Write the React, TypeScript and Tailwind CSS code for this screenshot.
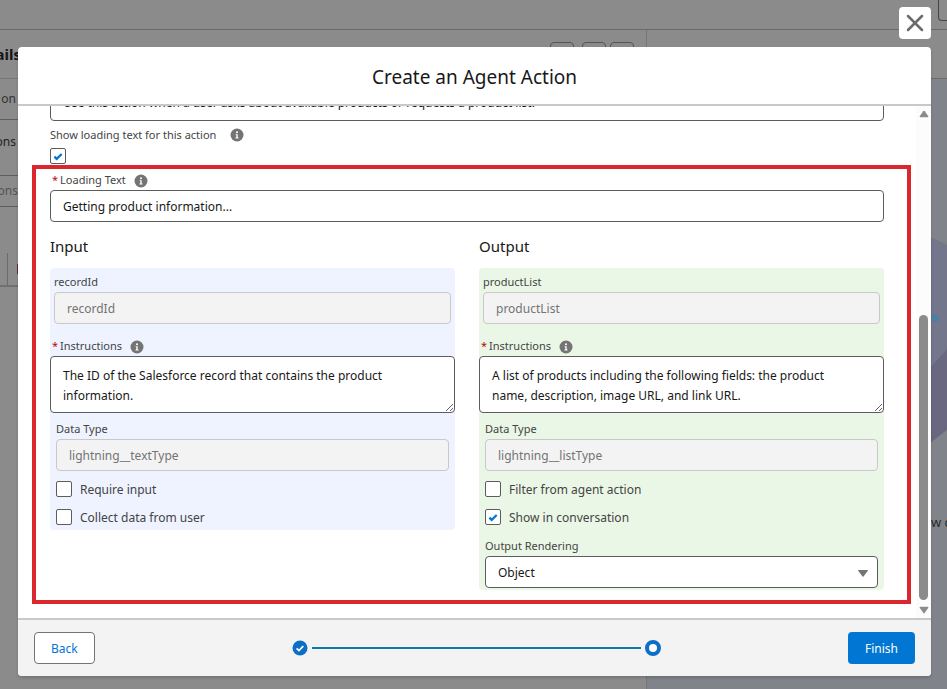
import React from 'react'
import { X } from 'lucide-react'
import { clsx } from 'clsx'

interface TextFieldProps {
  id: string
  label: string
  value: string
  className?: string
}

const labelText = 'text-[11px] leading-4 text-[#444444]'
const disabledInput =
  'block h-8 w-full rounded border border-[#c9c9c9] bg-[#f3f3f3] px-3 text-xs text-[#747474]'

const InfoIcon = ({ about }: { about: string }) => (
  <button type="button" aria-label={`Help: ${about}`} className="size-3.5">
    <svg viewBox="0 0 14 14" className="size-3.5">
      <circle cx="7" cy="7" r="6.5" fill="#747474" />
      <circle cx="7" cy="4.3" r="1" fill="#fff" />
      <path d="M5.6 6.2h2.1v3.3h.8v.9H5.5v-.9h.8V7.1h-.7z" fill="#fff" />
    </svg>
  </button>
)

const Required = () => <span className="mr-0.5 text-[#ba0517]">*</span>

const DisabledField = ({ id, label, value, className }: TextFieldProps) => (
  <div className={className}>
    <label htmlFor={id} className={clsx(labelText, 'block pb-0.5')}>{label}</label>
    <input id={id} value={value} disabled readOnly className={disabledInput} />
  </div>
)

const InstructionsField = ({ id, value }: { id: string; value: string }) => (
  <div>
    <div className="flex h-8 items-end gap-2 px-0.5 pb-0.5">
      <label htmlFor={id} className={labelText}><Required />Instructions</label>
      <InfoIcon about="Instructions" />
    </div>
    <textarea
      id={id}
      defaultValue={value}
      className="block h-[57px] w-full resize overflow-hidden rounded border border-[#5c5c5c] bg-white pt-[9px] pr-8 pl-3 text-xs leading-5 text-[#181818]"
    />
  </div>
)

interface CheckProps {
  id: string
  label: string
  checked?: boolean
  hideLabel?: boolean
}

const Check = ({ id, label, checked = false, hideLabel = false }: CheckProps) => (
  <div className="flex h-4 items-center gap-2">
    <span className="relative size-4">
      <input
        id={id}
        type="checkbox"
        defaultChecked={checked}
        aria-label={hideLabel ? label : undefined}
        className="peer block size-4 appearance-none rounded-xs border border-[#5c5c5c] bg-white"
      />
      <svg
        viewBox="0 0 16 16"
        className="pointer-events-none absolute inset-0 hidden size-4 peer-checked:block"
      >
        <path d="M4.4 8.6l2.3 2.3 5-4.9" fill="none" stroke="#0176d3" strokeWidth="2.2" />
      </svg>
    </span>
    {!hideLabel && <label htmlFor={id} className="pt-0.5 text-xs text-[#444444]">{label}</label>}
  </div>
)

// Page that sits dimmed under the modal
const Backdrop = () => (
  <div aria-hidden="true" className="flex h-screen flex-col overflow-hidden bg-[#8b8b8b]">
    <div className="flex h-[30px] shrink-0 justify-end border-b border-[#696969]">
      <div className="h-[21px] w-[9px] rounded-bl border-b border-l border-[#444444]" />
    </div>
    <div className="flex min-h-0 flex-1">
      <div className="w-[647px] shrink-0 border-r border-[#777777]">
        <div className="flex h-[49px] items-start justify-between border-b border-[#777777] pr-3">
          <div className="flex w-[21px] justify-end overflow-hidden pt-3.5 text-[15px] leading-5 font-bold text-[#161616]">
            Details
          </div>
          <div className="flex gap-1 pt-3">
            <div className="mr-1 size-6 rounded border border-[#555555]" />
            <div className="size-6 rounded border border-[#555555]" />
            <div className="size-6 rounded border border-[#555555]" />
          </div>
        </div>
        <div className="flex h-10 w-4 items-center justify-end overflow-hidden text-xs text-[#333333]">on</div>
        <div className="flex h-[57px] border-y border-[#5e5e5e]">
          <div className="flex h-11 w-4 items-center justify-end overflow-hidden text-xs text-[#222222]">Actions</div>
        </div>
        <div className="flex h-[31px] border-b border-[#5e5e5e]">
          <div className="flex w-[18px] items-center justify-end overflow-hidden text-xs text-[#555555]">Actions</div>
        </div>
        <div className="mt-[46px] flex h-[34px] items-center border-b-2 border-[#707070]">
          <div className="h-8 w-2 border-r border-[#6b6b6b]" />
          <div className="ml-[9px] h-2.5 w-1 bg-[#6a2b2b]" />
        </div>
      </div>
      <div className="flex flex-1 flex-col">
        <div className="h-[49px] border-b border-[#6d6d6d]" />
        <div className="flex flex-1 justify-end bg-[#808389]">
          <svg viewBox="0 0 16 610" className="h-[610px] w-4">
            <path d="M0 158l16 8v184l-16 14z" fill="#74778c" />
            <path d="M0 288l16-18v81l-16 12z" fill="#6a6880" />
            <circle cx="4" cy="239" r="4" fill="#4f7f9f" />
            <text x="0" y="448" fontSize="13" fill="#2b2b2b">w c</text>
          </svg>
        </div>
      </div>
    </div>
  </div>
)

const Scrollbar = () => (
  <div aria-hidden="true" className="flex w-[15px] flex-col items-center bg-[#fcfcfc] pt-1 pb-1">
    <svg viewBox="0 0 10 8" className="h-2 w-2.5">
      <path d="M4.2 1.2q.8-1 1.6 0l3.5 5q.5 1-.7 1H1.4q-1.2 0-.7-1z" fill="#8b8b8b" />
    </svg>
    <div className="flex-[197]" />
    <div className="w-[9px] flex-[285] rounded-full bg-[#8b8b8b]" />
    <svg viewBox="0 0 10 8" className="mt-1.5 h-2 w-2.5">
      <path d="M4.2 6.8q.8 1 1.6 0l3.5-5q.5-1-.7-1H1.4q-1.2 0-.7 1z" fill="#8b8b8b" />
    </svg>
  </div>
)

const InputPanel = () => (
  <section>
    <h2 className="pt-3 pb-2.5 text-[15px] leading-6 text-[#181818]">Input</h2>
    <div className="rounded bg-[#eef3ff] pb-[5px]">
      <DisabledField id="record-id" label="recordId" value="recordId" className="px-1 pt-1.5" />
      <InstructionsField
        id="input-instructions"
        value="The ID of the Salesforce record that contains the product information."
      />
      <div className="px-1.5">
        <DisabledField id="input-type" label="Data Type" value="lightning__textType" className="pt-2" />
        <div className="flex flex-col gap-3 pt-2.5">
          <Check id="require-input" label="Require input" />
          <Check id="collect-data" label="Collect data from user" />
        </div>
      </div>
    </div>
  </section>
)

const OutputPanel = () => (
  <section>
    <h2 className="pt-3 pb-2.5 text-[15px] leading-6 text-[#181818]">Output</h2>
    <div className="rounded bg-[#ebf7e6] pb-0.5">
      <DisabledField id="product-list" label="productList" value="productList" className="px-1 pt-1.5" />
      <InstructionsField
        id="output-instructions"
        value="A list of products including the following fields: the product name, description, image URL, and link URL."
      />
      <div className="px-1.5">
        <DisabledField id="output-type" label="Data Type" value="lightning__listType" className="pt-2" />
        <div className="flex flex-col gap-3 pt-2.5">
          <Check id="filter-action" label="Filter from agent action" />
          <Check id="show-conversation" label="Show in conversation" checked />
        </div>
        <label htmlFor="rendering" className={clsx(labelText, 'block pt-[13px] pb-0.5')}>
          Output Rendering
        </label>
        <div className="relative">
          <select
            id="rendering"
            className="block h-8 w-full appearance-none rounded border border-[#5c5c5c] bg-white px-3 pt-px text-xs text-[#181818]"
          >
            <option>Object</option>
          </select>
          <svg viewBox="0 0 10 7" className="pointer-events-none absolute top-3.5 right-2.5 h-[7px] w-2.5">
            <path d="M.4 0h9.2q.6.2.2.8L5.5 6.4q-.5.5-1 0L.2.8Q-.2.2.4 0z" fill="#747474" />
          </svg>
        </div>
      </div>
    </div>
  </section>
)

const Progress = () => (
  <div className="ml-2.5 flex w-[369px] items-center gap-1" role="img" aria-label="Step 2 of 2">
    <svg viewBox="0 0 16 16" className="size-4 shrink-0">
      <circle cx="8" cy="8" r="7.5" fill="#0b6fc6" />
      <path d="M4.6 8.3l2.3 2.2 4.4-4.4" fill="none" stroke="#fff" strokeWidth="1.7" />
    </svg>
    <div className="h-0.5 flex-1 bg-[#0b7aa5]" />
    <div className="size-4 shrink-0 rounded-full border-4 border-[#0b6fc6] bg-white" />
  </div>
)

export default function App() {
  return (
    <div className="relative font-['Noto_Sans','Segoe_UI',sans-serif]">
      <Backdrop />
      <div className="absolute inset-0 flex flex-col pt-[47px] pr-4 pb-[13px] pl-[18px]">
        <button
          type="button"
          aria-label="Close"
          className="absolute top-[7px] right-4 flex size-8 items-center justify-center rounded bg-white"
        >
          <X className="size-7 text-[#6b6b6b]" strokeWidth={2.2} />
        </button>
        <div
          role="dialog"
          aria-label="Create an Agent Action"
          className="flex min-h-0 flex-1 flex-col overflow-hidden rounded bg-white shadow-[0_2px_3px_rgba(0,0,0,0.16)]"
        >
          <header className="flex h-[59px] shrink-0 items-center justify-center border-b-2 border-[#c9c9c9]">
            <h1 className="pt-0.5 text-[19px] leading-7 text-[#181818]">Create an Agent Action</h1>
          </header>

          <div className="flex min-h-0 flex-1">
            <main className="flex flex-1 flex-col justify-end overflow-hidden pb-3.5">
              <div className="pr-8 pb-px pl-8">
                <textarea
                  aria-label="Agent Action Instructions"
                  defaultValue="Use this action when a user asks about available products or requests a product list."
                  className="block h-[42px] w-full resize-none overflow-hidden rounded border border-[#5c5c5c] px-3 pt-[15px] text-xs text-[#181818]"
                />
                <div className="flex h-[27px] items-center gap-3.5">
                  <span className={labelText}>Show loading text for this action</span>
                  <InfoIcon about="Show loading text for this action" />
                </div>
                <Check id="show-loading" label="Show loading text for this action" checked hideLabel />
              </div>

              <div className="mr-[5px] ml-3.5 border-4 border-[#d9272d] pr-[23px] pb-2.5 pl-3.5">
                <div className="flex h-[21px] items-end gap-2 px-0.5 pb-0.5">
                  <label htmlFor="loading-text" className={labelText}><Required />Loading Text</label>
                  <InfoIcon about="Loading Text" />
                </div>
                <input
                  id="loading-text"
                  defaultValue="Getting product information..."
                  className="block h-8 w-full rounded border border-[#5c5c5c] bg-white px-3 text-xs text-[#181818]"
                />
                <div className="grid grid-cols-2 items-start gap-6">
                  <InputPanel />
                  <OutputPanel />
                </div>
              </div>
            </main>
            <Scrollbar />
          </div>

          <footer className="flex h-[58px] shrink-0 items-center justify-between border-t-2 border-[#c9c9c9] bg-[#f3f3f3] px-4">
            <button type="button" className="h-8 rounded border border-[#747474] bg-white px-4 pt-px text-xs text-[#0176d3]">
              Back
            </button>
            <Progress />
            <button type="button" className="h-8 rounded bg-[#0176d3] px-[17px] pt-px text-xs text-white">Finish</button>
          </footer>
        </div>
      </div>
    </div>
  )
}
